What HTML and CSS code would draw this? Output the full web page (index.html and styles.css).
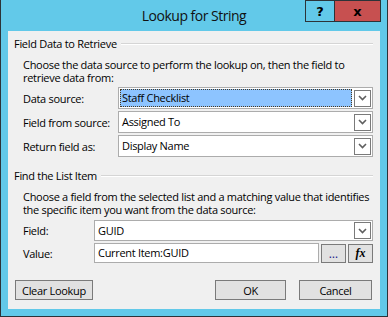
FILE: index.html
```html
<!DOCTYPE html>
<html>
<head>
<meta charset="utf-8">
<link rel="stylesheet" href="styles.css">
</head>
<body>
<div class="window">
  <div class="titlebar">
    <div class="tb-side"></div>
    <div class="title">Lookup for String</div>
    <div class="tb-side tb-controls">
      <div class="tb-btn tb-help">?</div>
      <div class="tb-btn tb-close">x</div>
    </div>
  </div>
  <div class="client">
    <section class="group group-data">
      <div class="group-head"><span class="group-title">Field Data to Retrieve</span><span class="group-line"></span></div>
      <div class="group-body">
        <p class="desc">Choose the data source to perform the lookup on, then the field to retrieve data from:</p>
        <div class="rows rows-data">
          <div class="row">
            <span class="label">Data source:</span>
            <div class="select focused"><span class="sel-text"><span class="hl">Staff Checklist</span></span><span class="arrow"><svg width="9" height="6" viewBox="0 0 9 6"><path d="M1 1 L4.5 4.5 L8 1" fill="none" stroke="#5f5f5f" stroke-width="1.6"/></svg></span></div>
          </div>
          <div class="row">
            <span class="label">Field from source:</span>
            <div class="select"><span class="sel-text">Assigned To</span><span class="arrow"><svg width="9" height="6" viewBox="0 0 9 6"><path d="M1 1 L4.5 4.5 L8 1" fill="none" stroke="#5f5f5f" stroke-width="1.6"/></svg></span></div>
          </div>
          <div class="row">
            <span class="label">Return field as:</span>
            <div class="select"><span class="sel-text">Display Name</span><span class="arrow"><svg width="9" height="6" viewBox="0 0 9 6"><path d="M1 1 L4.5 4.5 L8 1" fill="none" stroke="#5f5f5f" stroke-width="1.6"/></svg></span></div>
          </div>
        </div>
      </div>
    </section>
    <section class="group group-item">
      <div class="group-head"><span class="group-title">Find the List Item</span><span class="group-line"></span></div>
      <div class="group-body">
        <p class="desc">Choose a field from the selected list and a matching value that identifies the specific item you want from the data source:</p>
        <div class="rows rows-item">
          <div class="row">
            <span class="label label-short">Field:</span>
            <div class="select select-field"><span class="sel-text">GUID</span><span class="arrow"><svg width="9" height="6" viewBox="0 0 9 6"><path d="M1 1 L4.5 4.5 L8 1" fill="none" stroke="#5f5f5f" stroke-width="1.6"/></svg></span></div>
          </div>
          <div class="row">
            <span class="label label-short">Value:</span>
            <div class="textbox"><span class="sel-text">Current Item:GUID</span></div>
            <div class="mini-btn dots">…</div>
            <div class="mini-btn fx">fx</div>
          </div>
        </div>
      </div>
    </section>
    <div class="footer">
      <div class="btn btn-clear">Clear Lookup</div>
      <div class="footer-right">
        <div class="btn btn-ok">OK</div>
        <div class="btn btn-cancel">Cancel</div>
      </div>
    </div>
  </div>
</div>
</body>
</html>
```
FILE: styles.css
```css
* { box-sizing: border-box; }
html, body { margin: 0; padding: 0; }
body {
  font-family: "Open Sans", "Noto Sans", sans-serif;
  font-size: 11px;
  letter-spacing: -0.3px;
  color: #000;
  background: #fff;
}
.window {
  width: 388px;
  height: 317px;
  background: #62c9e9;
  border: 1px solid #2c3338;
  border-top: 0;
  display: flex;
  flex-direction: column;
}
.titlebar {
  height: 31px;
  display: grid;
  grid-template-columns: 1fr auto 1fr;
  align-items: start;
}
.title {
  font-size: 14px;
  letter-spacing: -0.5px;
  line-height: 31px;
  color: #111;
}
.tb-controls {
  display: flex;
  justify-content: flex-end;
  padding-right: 6px;
}
.tb-btn {
  height: 22px;
  border: 1px solid #2c3338;
  display: flex;
  align-items: center;
  justify-content: center;
  font-weight: bold;
  font-size: 13px;
  letter-spacing: 0;
  font-family: "DejaVu Sans", sans-serif;
  color: #000;
}
.tb-help { width: 29px; border-right: 0; }
.tb-close { width: 47px; background: #c75050; }
.client {
  flex: 1;
  margin: 0 7px 7px 7px;
  background: #f0f0f0;
  padding: 6px 7px 0 6px;
  display: flex;
  flex-direction: column;
  white-space: nowrap;
}
.group-head {
  display: flex;
  align-items: center;
  height: 14px;
}
.group-title { padding-right: 4px; line-height: 14px; }
.group-line {
  flex: 1;
  height: 2px;
  border-top: 1px solid #d5d5d5;
  border-bottom: 1px solid #fff;
}
.group-body { padding-left: 9px; }
.desc {
  margin: 7px 0 0 0;
  line-height: 13px;
  white-space: normal;
}
.rows { display: flex; flex-direction: column; gap: 2px; }
.rows-data { margin-top: 3px; }
.row { display: flex; align-items: center; }
.label { width: 95px; flex: none; }
.label-short { width: 71px; }
.select, .textbox {
  flex: 1;
  height: 22px;
  border: 1px solid #acacac;
  background: #fff;
  display: flex;
  align-items: center;
  padding: 1px;
}
.sel-text { flex: 1; padding-left: 2px; line-height: 18px; height: 18px; display: flex; }
.focused .sel-text { padding-left: 0; }
.hl {
  flex: 1;
  background: #8dc4ff;
  outline: 1px dotted #4a3a20;
  outline-offset: -1px;
  padding-left: 2px;
}
.arrow {
  width: 17px;
  height: 17px;
  border: 1px solid #7a7a7a;
  margin-left: 2px;
  display: flex;
  align-items: center;
  justify-content: center;
  background: #fff;
}
.group-item { margin-top: 12px; }
.rows-item { margin-top: 4px; }
.select-field { height: 21px; }
.textbox { height: 20px; }
.mini-btn {
  width: 25px;
  height: 19px;
  margin-left: 2px;
  border: 1px solid #7a7a7a;
  background: #e1e1e1;
  display: flex;
  align-items: center;
  justify-content: center;
}
.dots { color: #1a1a8a; font-size: 12px; letter-spacing: 0; }
.fx { font-family: "Liberation Serif", serif; font-style: italic; font-weight: bold; font-size: 12px; letter-spacing: 0; }
.footer {
  margin-top: auto;
  margin-bottom: 9px;
  display: flex;
  justify-content: space-between;
  padding-left: 1px;
}
.footer-right { display: flex; gap: 13px; }
.btn {
  height: 20px;
  border: 1px solid #7a7a7a;
  background: #e1e1e1;
  display: flex;
  align-items: center;
  justify-content: center;
}
.btn-clear { width: 78px; }
.btn-ok { width: 71px; }
.btn-cancel { width: 73px; margin-right: 1px; }
```
